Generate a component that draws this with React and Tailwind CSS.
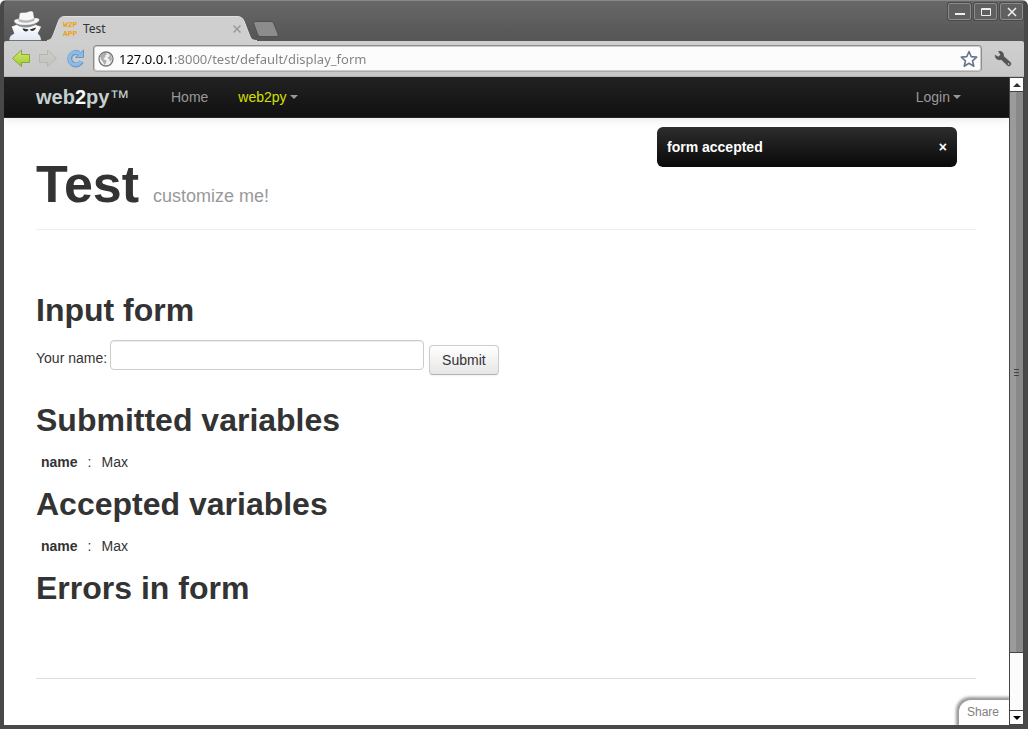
import React from "react";

function IncognitoIcon() {
  return (
    <svg className="h-[31px] w-[34px] shrink-0" viewBox="0 0 34 31" aria-hidden="true">
      <defs>
        <linearGradient id="coat" x1="0" y1="0" x2="0" y2="1">
          <stop offset="0" stopColor="#ffffff" />
          <stop offset="1" stopColor="#e0e8f3" />
        </linearGradient>
      </defs>
      <path d="M0 30.500C.3 26 2.500 24.500 5 23.500L2.300 16.500L7.500 14.500H26L32.500 16.500L29 23.500C31 25 32.300 27 32.300 30.500Z" fill="url(#coat)" stroke="#4b4b4b" strokeWidth="0.5" />
      <path d="M7 14.500C12 18.500 22 18.500 28 14L25 12H8Z" fill="#8b8f96" />
      <path d="M13.500 18.200L19.500 19.600C18.800 22.300 14.500 22.300 13.500 18.200ZM27 17.500L20.800 19.600C21.800 21.800 26.200 21.200 27 17.500Z" fill="#2f2f2f" />
      <path d="M5.200 12C4.200 9.500 7 9 9.800 8.800L10.500 3.500C12 1.500 16 3 18.500 2C21 .600 23.500 .600 24.300 2.500L25.300 8C29 7.500 31.500 8.500 30 11C26.500 16.200 8.500 17 5.200 12Z" fill="#f7f7f7" stroke="#555" strokeWidth="0.4" />
      <path d="M9.800 8.800C14 11 21 10.800 25.300 8L25.700 10.500C20.500 13.300 13.500 13.500 9.500 11.300Z" fill="#b6b8bb" />
    </svg>
  );
}

function TabShape() {
  return (
    <svg className="absolute inset-0 h-full w-full" viewBox="0 0 210 25" preserveAspectRatio="none" aria-hidden="true">
      <path d="M0 25V24.500C4 24 5 22 7 17L11.500 5C13 1.500 14.500.500 18 .500H190C194 .500 195.500 2 197 5L202 18C204 23 205 24.500 210 24.500V25Z" fill="#cfcfcf" />
      <path d="M0 24.500C4 24 5 22 7 17L11.500 5C13 1.500 14.500.500 18 .500H190C194 .500 195.500 2 197 5L202 18C204 23 205 24.500 210 24.500" fill="none" stroke="#e0e0e0" />
    </svg>
  );
}

function Arrow({ id, from, to, stroke, flip }) {
  return (
    <svg className="h-5 w-5" viewBox="0 0 20 20" aria-hidden="true">
      <defs>
        <linearGradient id={id} x1="0" y1="0" x2="0" y2="1">
          <stop offset="0" stopColor={from} />
          <stop offset="1" stopColor={to} />
        </linearGradient>
      </defs>
      <path transform={flip ? "translate(20 0) scale(-1 1)" : undefined} d="M1.500 9.500L10.500 1V5.500H18.500V13.500H10.500V17.500Z" fill={`url(#${id})`} stroke={stroke} strokeLinejoin="round" />
    </svg>
  );
}

function ReloadIcon() {
  return (
    <svg className="h-5 w-5" viewBox="0 0 20 20" aria-hidden="true">
      <path d="M16.500 12.500A6.200 6.200 0 1 1 13.800 4.200" fill="none" stroke="#6798c9" strokeWidth="5" />
      <path d="M18.500 1V8.500H10.500Z" fill="#8bbbe6" stroke="#6798c9" strokeLinejoin="round" />
      <path d="M16 12.500A6.200 6.200 0 1 1 14.500 4.700" fill="none" stroke="#8bbbe6" strokeWidth="3.200" />
    </svg>
  );
}

function GlobeIcon() {
  return (
    <svg className="h-4 w-4 shrink-0" viewBox="0 0 16 16" aria-hidden="true">
      <circle cx="8" cy="8" r="7" fill="#f1f1f1" stroke="#777" strokeWidth="1.300" />
      <path d="M2 5C3.500 2.500 5.500 1.800 8 1.800L9 3.500L7 4.500L7.500 6L5.500 7L6 8.500L8.500 9.500L8 12L6.500 14L5 11L3 8.500Z" fill="#adadad" />
      <path d="M10.500 2.500L13.500 5L14 8.500L12.500 11L11 8.500L9.500 6.500L11.500 5Z" fill="#b4b4b4" />
    </svg>
  );
}

function StarIcon() {
  return (
    <svg className="h-[18px] w-[18px]" viewBox="0 0 18 18" aria-hidden="true">
      <path d="M9 1.500L11.200 6.600L16.700 7.100L12.500 10.800L13.800 16.200L9 13.300L4.200 16.200L5.500 10.800L1.300 7.100L6.800 6.600Z" fill="#fff" stroke="#68758c" strokeWidth="1.600" strokeLinejoin="round" />
    </svg>
  );
}

function WrenchIcon() {
  return (
    <svg className="h-[18px] w-[18px]" viewBox="0 0 18 18" aria-hidden="true">
      <path d="M4.500 1.500C7.500 .800 10 3 9.500 6.200L16.500 12.500C18 14.500 15.500 17 13.500 15.500L7.200 9.500C4 10.500 1 8.500 1.200 5.200L4.300 7L6.700 4.800Z" fill="#555" stroke="#444" strokeWidth="0.5" />
      <circle cx="14.600" cy="13.900" r="0.900" fill="#bbb" />
    </svg>
  );
}

function WindowButton({ label, children }) {
  return (
    <button type="button" aria-label={label} className="flex h-[17px] w-[23px] items-center justify-center rounded-xs border border-[#8c8c8c] bg-[#606060] shadow-[0_0_0_1px_#4b4b4b]">
      <svg className="h-3 w-3" viewBox="0 0 12 12" fill="none" stroke="#eeeeee" aria-hidden="true">{children}</svg>
    </button>
  );
}

function TitleBar() {
  return (
    <header className="flex h-[41px] items-end bg-linear-to-b from-[#686868] to-[#555555] pl-[5px]">
      <IncognitoIcon />
      <div className="relative -mr-1 ml-1 flex h-[25px] w-[210px] items-center px-4">
        <TabShape />
        <span className="relative flex w-4 flex-col font-['Liberation_Mono',monospace] text-[8px] font-bold leading-[9px] text-[#f0a010]">
          <span>W2P</span>
          <span>APP</span>
        </span>
        <span className="relative ml-1 flex-1 text-xs text-[#333]">Test</span>
        <button type="button" aria-label="Close tab" className="relative">
          <svg className="h-2 w-2" viewBox="0 0 8 8" stroke="#999" strokeWidth="1.500" aria-hidden="true"><path d="M.500 .500L7.500 7.500M7.500 .500L.500 7.500" /></svg>
        </button>
      </div>
      <button type="button" aria-label="New tab" className="mb-1">
        <svg className="h-4 w-[26px]" viewBox="0 0 26 16" aria-hidden="true">
          <path d="M3 .500H18C20 .500 20.500 1.500 21 3L25 13C25.500 15 25 15.500 23 15.500H8C6 15.500 5 14.500 4.500 13L.800 3C.300 1 1 .500 3 .500Z" fill="#8c8c8c" stroke="#505050" />
        </svg>
      </button>
      <div className="ml-auto flex gap-[3px] self-start pr-px pt-[3px]">
        <WindowButton label="Minimize"><path d="M1 8H11" strokeWidth="2" /></WindowButton>
        <WindowButton label="Maximize"><path d="M1.500 2.500H10.500V9.500H1.500ZM1.500 3.500H10.500" /></WindowButton>
        <WindowButton label="Close"><path d="M2 2L10 10M10 2L2 10" strokeWidth="1.600" /></WindowButton>
      </div>
    </header>
  );
}

function Toolbar() {
  return (
    <div className="flex h-9 items-center rounded-t-xs border-b border-[#b4b4b4] bg-linear-to-b from-[#cfcfcf] to-[#c8c8c8] pl-[7px] pr-3">
      <div className="flex gap-[7px]">
        <button type="button" aria-label="Back"><Arrow id="back" from="#d3ea75" to="#a0c82d" stroke="#86a83a" /></button>
        <button type="button" aria-label="Forward"><Arrow id="forward" from="#cdcdc8" to="#c2c3be" stroke="#b5b5b0" flip /></button>
        <button type="button" aria-label="Reload"><ReloadIcon /></button>
      </div>
      <div className="ml-2 mr-3 flex h-[27px] flex-1 items-center rounded-sm border border-[#8c8c8c] border-b-[#aaa] bg-[#fcfcfc] pl-1 pr-[3px] shadow-[inset_0_0_0_1px_#ccc]">
        <GlobeIcon />
        <input
          type="text"
          aria-label="Address"
          defaultValue="127.0.0.1:8000/test/default/display_form"
          className="ml-[5px] min-w-0 flex-1 bg-[linear-gradient(90deg,#000_54px,#808080_54px)] bg-clip-text text-[13px] leading-5 text-transparent outline-none"
        />
        <button type="button" aria-label="Bookmark this page"><StarIcon /></button>
      </div>
      <button type="button" aria-label="Settings"><WrenchIcon /></button>
    </div>
  );
}

function Caret() {
  return <span className="ml-[3px] border-x-4 border-t-4 border-x-transparent border-t-[#999]" />;
}

function Navbar() {
  return (
    <nav className="flex h-[41px] items-center border-b border-[#252525] bg-linear-to-b from-[#222] to-[#111] pl-8 pr-12 text-[#999] shadow-[0_1px_10px_rgba(0,0,0,0.1)]">
      <a href="#home" className="w-[135px] text-xl font-bold text-[#c5d0d0]">
        web<span className="text-white">2</span>py<span className="font-normal">™</span>
      </a>
      <a href="#home">Home</a>
      <a href="#web2py" className="ml-[30px] flex items-center text-[#d4e000]">web2py<Caret /></a>
      <a href="#login" className="ml-auto flex items-center">Login<Caret /></a>
    </nav>
  );
}

function Heading({ children }) {
  return <h2 className="text-[32px] font-bold leading-10">{children}</h2>;
}

function Variables({ title }) {
  return (
    <section>
      <Heading>{title}</Heading>
      <table className="my-3">
        <tbody>
          <tr>
            <th scope="row" className="px-[5px] py-0 text-left font-bold">name</th>
            <td className="px-[5px] py-0">:</td>
            <td className="px-[5px] py-0">Max</td>
          </tr>
        </tbody>
      </table>
    </section>
  );
}

function Page() {
  return (
    <div className="relative flex min-w-0 flex-1 flex-col bg-white font-['Liberation_Sans',Arial,sans-serif] text-sm leading-5 text-[#333]">
      <Navbar />
      <div role="status" className="absolute right-[52px] top-[50px] flex h-10 w-[300px] items-center justify-between rounded-md bg-linear-to-b from-[#2d2d2d] to-[#0a0a0a] px-[10px] font-bold text-white">
        <span>form accepted</span>
        <button type="button" aria-label="Dismiss" className="font-bold">×</button>
      </div>
      <main className="flex-1 pb-8 pl-8 pr-[33px] pt-9">
        <div className="flex items-baseline gap-[14px] border-b border-[#eee] pb-[15px]">
          <h1 className="text-[52px] font-bold leading-[60px]">Test</h1>
          <small className="text-lg text-[#999]">customize me!</small>
        </div>
        <div className="mt-[60px]">
          <Heading>Input form</Heading>
          <form className="mb-[25px] mt-[10px] flex items-start" onSubmit={(e) => e.preventDefault()}>
            <label htmlFor="name" className="mr-[3px] mt-2">Your name:</label>
            <input id="name" name="name" type="text" className="h-[30px] w-[314px] rounded border border-[#ccc] px-2 shadow-[inset_0_1px_1px_rgba(0,0,0,0.075)]" />
            <button type="submit" className="ml-[5px] mt-[5px] h-[30px] rounded border border-[#ccc] border-b-[#b3b3b3] bg-linear-to-b from-white to-[#e6e6e6] px-3 shadow-[0_1px_2px_rgba(0,0,0,0.05)]">Submit</button>
          </form>
        </div>
        <Variables title="Submitted variables" />
        <Variables title="Accepted variables" />
        <Heading>Errors in form</Heading>
        <hr className="mt-[70px] border-[#ddd]" />
      </main>
      <a href="#share" className="absolute bottom-0 right-0 rounded-tl-xl bg-white pb-1 pl-2 pr-[10px] pt-[3px] text-xs leading-[18px] text-[#808080] shadow-[-1px_-1px_3px_2px_#999]">Share</a>
    </div>
  );
}

function ScrollBar() {
  return (
    <div className="relative flex w-[15px] flex-col border border-[#444] bg-[#fcfcfc]" aria-hidden="true">
      <div className="flex h-[13px] items-center justify-center rounded-xs bg-white">
        <span className="border-x-4 border-b-4 border-x-transparent border-b-[#333]" />
      </div>
      <div className="flex flex-1 flex-col items-center justify-center gap-[2px] border-y border-[#444] bg-linear-to-r from-[#9b9b9b] from-50% to-[#898989] to-50%">
        <span className="h-px w-[5px] bg-[#444]" />
        <span className="h-px w-[5px] bg-[#444]" />
        <span className="h-px w-[5px] bg-[#444]" />
      </div>
      <div className="h-[57px]" />
      <div className="flex h-[14px] items-center justify-center border-t border-[#444] bg-white">
        <span className="border-x-4 border-t-4 border-x-transparent border-t-black" />
      </div>
    </div>
  );
}

export default function App() {
  return (
    <div className="flex min-h-screen flex-col overflow-hidden rounded-t-md border-4 border-t border-[#484848] border-t-[#888] bg-[#484848] font-['Noto_Sans',sans-serif]">
      <div className="-mt-px">
        <TitleBar />
      </div>
      <Toolbar />
      <div className="flex flex-1 overflow-hidden">
        <Page />
        <ScrollBar />
      </div>
    </div>
  );
}
